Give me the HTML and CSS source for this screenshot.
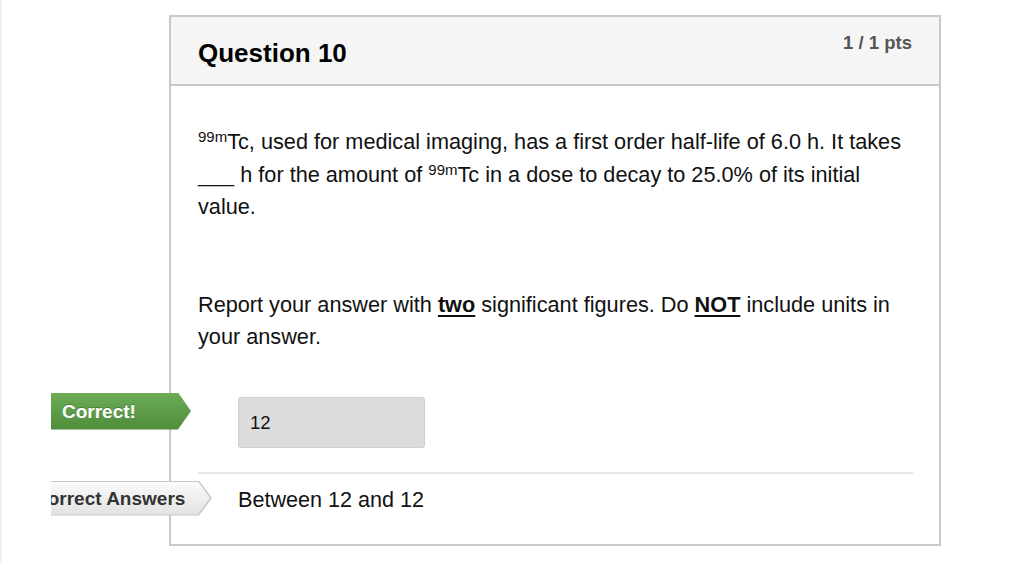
FILE: index.html
```html
<!DOCTYPE html>
<html lang="en">
<head>
<meta charset="utf-8">
<title>Question 10</title>
<link rel="stylesheet" href="styles.css">
</head>
<body>
<div class="page">
  <div class="card">
    <div class="card-header">
      <h2 class="q-title">Question 10</h2>
      <div class="q-pts">1 / 1 pts</div>
    </div>
    <div class="card-body">
      <p class="q-text"><sup>99m</sup>Tc, used for medical imaging, has a first order half-life of 6.0 h. It takes ___ h for the amount of <sup>99m</sup>Tc in a dose to decay to 25.0% of its initial value.</p>
      <p class="q-text q-text-2">Report your answer with <b class="u">two</b> significant figures. Do <b class="u">NOT</b> include units in your answer.</p>
      <div class="answers">
        <div class="answer-row">
          <div class="badge badge-correct"><span class="badge-label">Correct!</span></div>
          <div class="answer-box">12</div>
        </div>
        <div class="sep"></div>
        <div class="answer-row answer-row-2">
          <div class="badge badge-ca"><span class="badge-inner"><span class="badge-label ca-label">Correct Answers</span></span></div>
          <div class="answer-text">Between 12 and 12</div>
        </div>
      </div>
    </div>
  </div>
</div>
</body>
</html>
```
FILE: styles.css
```css
html, body {
  margin: 0;
  padding: 0;
  background: #fff;
}
body {
  font-family: "Liberation Sans", Arial, Helvetica, sans-serif;
  color: #000;
}
.page {
  border-left: 2px solid #efefef;
  min-height: 563px;
  box-sizing: border-box;
  padding: 15px 0 0 167px;
}
.card {
  width: 772px;
  box-sizing: border-box;
  border: 2px solid #c9c9c9;
  background: #fff;
}
.card-header {
  background: #f5f5f5;
  border-bottom: 2px solid #c9c9c9;
  height: 67px;
  display: flex;
  justify-content: space-between;
  align-items: flex-start;
  padding: 0 27px 0 27px;
}
.q-title {
  margin: 0;
  font-size: 26px;
  font-weight: bold;
  line-height: 30px;
  padding-top: 21px;
  color: #000;
}
.q-pts {
  font-size: 18.5px;
  font-weight: bold;
  color: #555;
  line-height: 22px;
  padding-top: 15px;
}
.card-body {
  padding: 40px 26px 28px 27px;
}
.q-text {
  margin: 0;
  font-size: 21.7px;
  line-height: 32.5px;
  color: #111;
}
.q-text sup {
  font-size: 15px;
  line-height: 0;
  vertical-align: 7px;
}
.q-text-2 {
  margin-top: 65px;
}
.u {
  text-decoration: underline;
  text-decoration-thickness: 2px;
  text-underline-offset: 3px;
}
.answers {
  margin-top: 43px;
}
.answer-row {
  position: relative;
  padding-left: 40px;
}
.answer-box {
  width: 187px;
  height: 51px;
  box-sizing: border-box;
  background: #dcdcdc;
  border: 1px solid #cfcfcf;
  border-radius: 3px;
  font-size: 18.5px;
  line-height: 49px;
  padding-left: 11px;
  color: #111;
}
.sep {
  height: 2px;
  background: #e6e6e6;
  margin: 24px 0 0 0;
}
.answer-row-2 {
  margin-top: 10px;
}
.answer-text {
  font-size: 21.6px;
  line-height: 32px;
  color: #111;
}
.badge {
  position: absolute;
  left: -147px;
  overflow: hidden;
  white-space: nowrap;
  font-weight: bold;
  font-size: 19px;
  box-sizing: border-box;
}
.badge-correct {
  top: -4px;
  width: 140px;
  height: 37px;
  line-height: 37px;
  padding-left: 11px;
  color: #fff;
  background: linear-gradient(#6cac56, #4f8c3b);
  clip-path: polygon(0 0, 127px 0, 140px 50%, 127px 100%, 0 100%);
  text-shadow: 0 -1px 0 rgba(0,0,0,0.25);
}
.badge-ca {
  top: -3px;
  width: 161px;
  height: 35px;
  background: #c8c8c8;
  clip-path: polygon(0 0, 148px 0, 161px 50%, 148px 100%, 0 100%);
}
.badge-inner {
  display: block;
  position: absolute;
  left: 0;
  top: 1px;
  width: 159px;
  height: 33px;
  line-height: 33px;
  background: linear-gradient(#fbfbfb, #e2e2e2);
  clip-path: polygon(0 0, 147px 0, 159px 50%, 147px 100%, 0 100%);
  color: #333;
  text-indent: -17px;
}
```
